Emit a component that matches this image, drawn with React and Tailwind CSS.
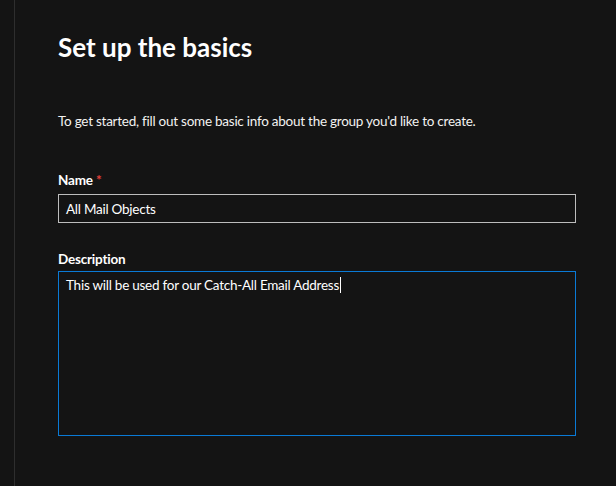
export default function App() {
  const font = { fontFamily: 'Lato, "Open Sans", sans-serif' };
  return (
    <div className="min-h-[486px] bg-[#141414] flex text-white" style={font}>
      <div className="w-[15px] shrink-0 border-r border-[#2e2e2e]" />
      <div className="flex-1 pl-[43px] pr-[40px] pt-[31px]">
        <h1 className="text-[26px] leading-[32px] font-bold">Set up the basics</h1>
        <p className="mt-[48px] text-[13.5px] leading-[20px] tracking-[-0.25px] text-[#f3f2f1]">
          To get started, fill out some basic info about the group you'd like to create.
        </p>
        <div className="mt-[39px] text-[13.5px] leading-[20px] tracking-[-0.2px] font-bold">
          Name <span className="text-[#e3403a]">*</span>
        </div>
        <div className="mt-[4px] h-[29px] border border-[#bdbdbd] flex items-center px-[7px] text-[13.5px] leading-[20px] tracking-[-0.25px]">
          All Mail Objects
        </div>
        <div className="mt-[26px] text-[13.5px] leading-[20px] tracking-[-0.2px] font-bold">Description</div>
        <div className="mt-[2px] h-[165px] border border-[#0a7ad6] px-[7px] pt-[3px] text-[13.5px] leading-[20px] tracking-[-0.25px]">
          This will be used for our Catch-All Email Address
          <span className="inline-block w-px h-[16px] bg-white align-[-3px] ml-[1px]" />
        </div>
      </div>
    </div>
  );
}
